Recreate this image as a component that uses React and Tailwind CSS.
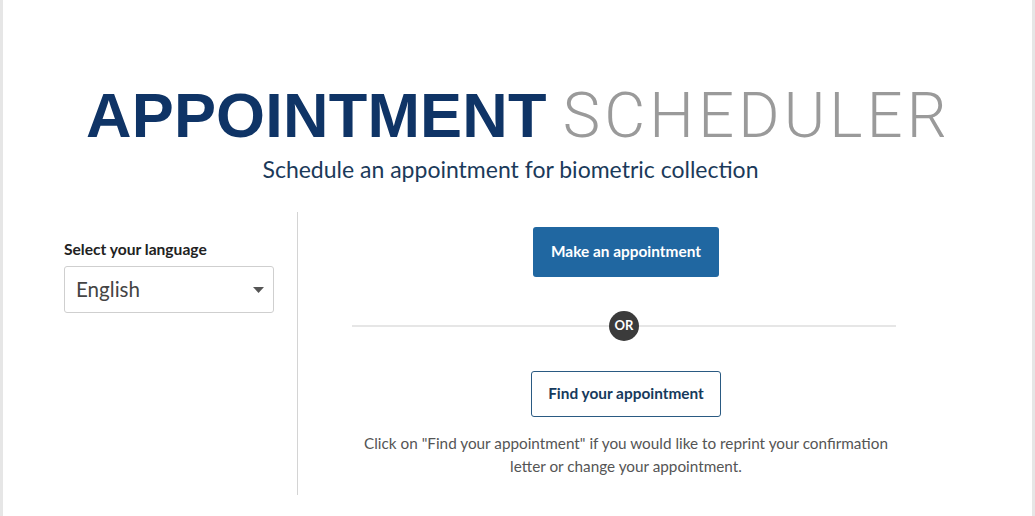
import React from "react";

export default function App() {
  const body = { fontFamily: "Lato, 'Noto Sans', sans-serif" };
  return (
    <div className="w-[1035px] h-[516px] overflow-hidden bg-white border-x-[3px] border-[#e6e6e6]" style={body}>
      <div className="flex flex-col items-center pt-[84px]">
        <div className="flex items-end gap-[16px] leading-none ml-[-2px]">
          <span className="text-[63px] font-bold text-[#0f3466] tracking-[0.2px]" style={{ fontFamily: "'Liberation Sans', Arial, sans-serif" }}>APPOINTMENT</span>
          <span className="text-[63px] font-light text-[#9a9a9a] tracking-[4.2px] mr-[-4px]" style={{ fontFamily: "Roboto, 'Liberation Sans', sans-serif" }}>SCHEDULER</span>
        </div>
        <div className="mt-[7px] text-[23px] text-[#1b3a5a] leading-[30px] mr-[14px]">Schedule an appointment for biometric collection</div>
      </div>
      <div className="flex mt-[28px] bg-white">
        <div className="w-[295px] border-r border-[#d4d4d4] pl-[61px] pt-[27px] h-[283px]">
          <div className="text-[15.6px] font-bold text-[#222] leading-[20px]">Select your language</div>
          <div className="mt-[7px] w-[210px] h-[47px] border border-[#cfcfcf] rounded-[3px] bg-white flex items-center justify-between px-[11px]">
            <span className="text-[20.6px] text-[#444]">English</span>
            <svg width="11" height="6" viewBox="0 0 11 6" className="mr-[-2px]"><path d="M0 0h11L5.5 6z" fill="#555" /></svg>
          </div>
        </div>
        <div className="w-[656px] flex flex-col items-center pt-[15px]">
          <button className="h-[50px] w-[186px] bg-[#2067a1] rounded-[3px] text-white font-bold text-[15.4px]">Make an appointment</button>
          <div className="relative w-[544px] h-[32px] mt-[33px] flex items-center justify-center ml-[-4px]">
            <div className="absolute left-0 right-0 top-1/2 h-[2px] -translate-y-1/2 bg-[#e6e6e6]" />
            <div className="relative w-[30px] h-[30px] rounded-full bg-[#3b3b3b] text-white text-[13px] font-bold flex items-center justify-center">OR</div>
          </div>
          <button className="mt-[29px] h-[46px] w-[190px] border border-[#2a5a82] rounded-[3px] bg-white text-[#163a5c] font-bold text-[15.4px]">Find your appointment</button>
          <p className="mt-[15px] text-[15.3px] text-[#555] text-center leading-[23px] w-[540px]">Click on "Find your appointment" if you would like to reprint your confirmation letter or change your appointment.</p>
        </div>
      </div>
    </div>
  );
}
